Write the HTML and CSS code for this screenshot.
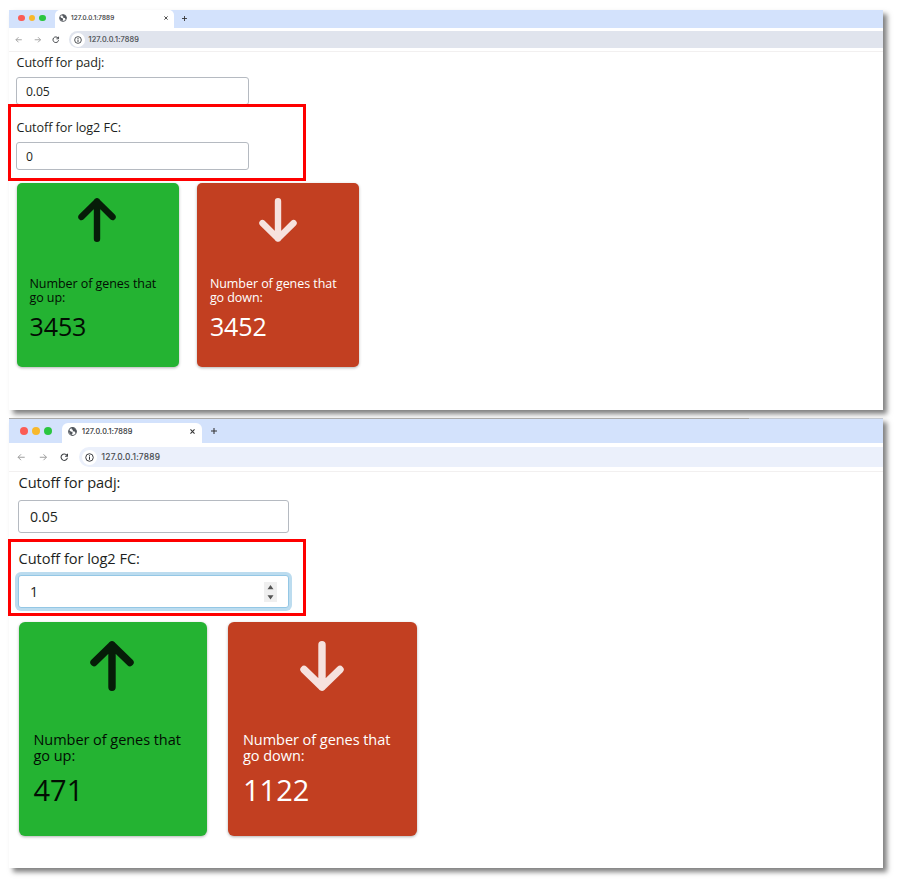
FILE: index.html
```html
<!DOCTYPE html>
<html lang="en">
<head>
<meta charset="utf-8">
<title>Gene cutoffs</title>
<link rel="stylesheet" href="styles.css">
</head>
<body>
<svg class="defs" aria-hidden="true">
  <symbol id="globe" viewBox="0 0 16 16"><circle cx="8" cy="8" r="6.9" fill="#fff" stroke="#50555b" stroke-width="1.8"/><path d="M2 5.5L5 8l3 1v2l-1 3C3 13.500 1 9 2 5.500zM7 1.500L6.500 4 9 5.500 8 7.500l4 .5 1 3 2-3C15 4 11 1 7 1.500z" fill="#50555b"/></symbol>
  <symbol id="back" viewBox="0 0 16 16"><path d="M14.500 8H2M7.500 2.500L2 8l5.500 5.500" fill="none" stroke="#999" stroke-width="1.800"/></symbol>
  <symbol id="forward" viewBox="0 0 16 16"><path d="M1.500 8H14M8.500 2.500L14 8l-5.500 5.500" fill="none" stroke="#999" stroke-width="1.800"/></symbol>
  <symbol id="reload" viewBox="0 0 16 16"><path d="M13 4.500A6 6 0 1 0 14 9M14 1.500v4.500H9.500" fill="none" stroke="#3c3f43" stroke-width="2"/></symbol>
  <symbol id="info" viewBox="0 0 16 16"><circle cx="8" cy="8" r="6.700" fill="none" stroke="#33363a" stroke-width="1.700"/><path d="M8 7v5M8 4v2" stroke="#33363a" stroke-width="1.800"/></symbol>
  <symbol id="close" viewBox="0 0 16 16"><path d="M1.500 1.500l13 13M14.500 1.500l-13 13" stroke="#333" stroke-width="3.400"/></symbol>
  <symbol id="plus" viewBox="0 0 16 16"><path d="M8 0v16M0 8h16" stroke="#333" stroke-width="2.800"/></symbol>
  <symbol id="up" viewBox="0 0 44 50" preserveAspectRatio="none"><path d="M22 46.300V4M4 21.500L22 4l18 17.500" fill="none" stroke="currentColor" stroke-width="7.400" stroke-linecap="round" stroke-linejoin="round"/></symbol>
  <symbol id="down" viewBox="0 0 44 50" preserveAspectRatio="none"><path d="M22 3.700V46M4 28.500L22 46l18-17.500" fill="none" stroke="currentColor" stroke-width="7.400" stroke-linecap="round" stroke-linejoin="round"/></symbol>
</svg>

<section class="window small">
  <div class="tabbar">
    <div class="lights"><i class="red"></i><i class="amber"></i><i class="green"></i></div>
    <div class="tab"><svg class="globe"><use href="#globe"/></svg><span class="tab-title">127.0.0.1:7889</span><svg class="close"><use href="#close"/></svg></div>
    <svg class="plus"><use href="#plus"/></svg>
  </div>
  <div class="toolbar">
    <svg class="nav"><use href="#back"/></svg><svg class="nav"><use href="#forward"/></svg><svg class="nav"><use href="#reload"/></svg>
    <div class="address"><span class="site"><svg class="info"><use href="#info"/></svg></span><span class="url">127.0.0.1:7889</span></div>
  </div>
  <main class="content">
    <div class="label"><span>Cutoff for padj:</span></div>
    <div class="field">0.05</div>
    <div class="label second"><span>Cutoff for log2 FC:</span></div>
    <div class="field">0</div>
    <div class="cards">
      <article class="card up"><svg class="arrow"><use href="#up"/></svg><p>Number of genes that<br>go up:</p><strong>3453</strong></article>
      <article class="card down"><svg class="arrow"><use href="#down"/></svg><p>Number of genes that<br>go down:</p><strong>3452</strong></article>
    </div>
  </main>
  <div class="highlight"></div>
</section>

<section class="window large">
  <div class="edge"></div>
  <div class="tabbar">
    <div class="lights"><i class="red"></i><i class="amber"></i><i class="green"></i></div>
    <div class="tab"><svg class="globe"><use href="#globe"/></svg><span class="tab-title">127.0.0.1:7889</span><svg class="close"><use href="#close"/></svg></div>
    <svg class="plus"><use href="#plus"/></svg>
  </div>
  <div class="toolbar">
    <svg class="nav"><use href="#back"/></svg><svg class="nav"><use href="#forward"/></svg><svg class="nav"><use href="#reload"/></svg>
    <div class="address"><span class="site"><svg class="info"><use href="#info"/></svg></span><span class="url">127.0.0.1:7889</span></div>
  </div>
  <main class="content">
    <div class="label"><span>Cutoff for padj:</span></div>
    <div class="field">0.05</div>
    <div class="label second"><span>Cutoff for log2 FC:</span></div>
    <div class="field focused">1<svg class="spinner" viewBox="0 0 13 20"><path d="M3.500 7.200L6.500 3l3 4.200zM3.500 13.200l3 4.200 3-4.200z" fill="#555"/></svg></div>
    <div class="cards">
      <article class="card up"><svg class="arrow"><use href="#up"/></svg><p>Number of genes that<br>go up:</p><strong>471</strong></article>
      <article class="card down"><svg class="arrow"><use href="#down"/></svg><p>Number of genes that<br>go down:</p><strong>1122</strong></article>
    </div>
  </main>
  <div class="highlight"></div>
</section>
</body>
</html>
```
FILE: styles.css
```css
* { box-sizing: border-box; }
body { margin: 0; padding: 10px 20px 0 9px; background: #fff; font-family: "Open Sans", "Noto Sans", sans-serif; color: #1d1f21; height: 880px; overflow: hidden; }
svg { display: block; flex: none; }
.defs { display: none; }

.window { position: relative; width: 874px; background: #fff; box-shadow: 4px 4px 5px rgba(0, 0, 0, .5); }
.small { height: 400px; margin-bottom: 8px; }
.large { height: 450px; }
.edge { height: 1px; margin-bottom: 1px; background: linear-gradient(90deg, #aaa9a8 0 740px, #c4cad4 740px); }
.large { background: linear-gradient(#d3e2fc 0 3px, #fff 3px); }

.tabbar { display: flex; align-items: center; background: #d3e2fc; }
.small .tabbar { height: 18px; }
.large .tabbar { height: 23px; }
.lights { display: flex; }
.lights i { border-radius: 50%; }
.red { background: #fb5c55; }
.amber { background: #f8b82c; }
.green { background: #2ac640; }
.small .lights { width: 46px; padding-left: 9px; gap: 4px; margin-top: -2px; }
.small .lights i { width: 6.500px; height: 6.500px; }
.large .lights { width: 53px; padding-left: 11px; gap: 4px; margin-top: -1px; }
.large .lights i { width: 8px; height: 8px; }
.tab { display: flex; align-items: center; align-self: flex-end; background: #fff; color: #303236; font-family: Inter, sans-serif; }
.small .tab { width: 119px; height: 18px; padding: 0 6px 3px 4px; border-radius: 5px 5px 0 0; font-size: 6.400px; letter-spacing: .12px; }
.large .tab { width: 140px; height: 20px; padding: 0 7px 4px 6px; border-radius: 6px 6px 0 0; font-size: 7.400px; letter-spacing: .18px; }
.tab-title { flex: 1; white-space: nowrap; -webkit-text-stroke: .15px; }
.small .globe { width: 8px; height: 8px; margin-right: 4px; }
.large .globe { width: 9px; height: 9px; margin-right: 5px; }
.small .close { width: 4px; height: 4px; }
.large .close { width: 5px; height: 5px; }
.plus { width: 6px; height: 6px; }
.small .plus { margin: -2px 0 0 8px; width: 5px; height: 5px; }
.large .plus { margin: -1px 0 0 9px; }

.toolbar { display: flex; align-items: center; border-bottom: 1px solid #f2f0f0; }
.small .toolbar { height: 24px; padding-left: 6px; gap: 11px; }
.large .toolbar { height: 29px; padding-left: 8px; gap: 13px; }
.small .nav { width: 7.500px; height: 7.500px; }
.large .nav { width: 8.500px; height: 8.500px; }
.address { flex: 1; display: flex; align-items: center; font-family: Inter, sans-serif; color: #46494d; }
.url { -webkit-text-stroke: .15px; }
.small .address { margin-left: -2px; height: 17px; padding-left: 2px; border-radius: 9px 0 0 9px; background: #e0e4ed; font-size: 7.400px; letter-spacing: .18px; }
.large .address { margin-left: -3px; height: 20px; padding-left: 3px; border-radius: 10px 0 0 10px; background: #ebf0fb; font-size: 8.500px; letter-spacing: .26px; }
.site { display: grid; place-items: center; background: #fff; border-radius: 50%; }
.small .site { width: 14px; height: 14px; margin-right: 4px; }
.large .site { width: 15px; height: 15px; margin-right: 5px; }
.small .info { width: 8px; height: 8px; }
.large .info { width: 9px; height: 9px; }

.label { white-space: nowrap; }
.field { position: relative; border: 1px solid #b5bac1; background: #fff; }
.small .content { padding-left: 7px; }
.small .label { height: 25px; line-height: 21px; font-size: 12.600px; letter-spacing: -.05px; padding-left: .5px; }
.small .label.second { height: 37px; padding-top: 12px; }
.small .field { width: 233px; height: 28px; line-height: 27px; padding-left: 9px; border-radius: 3px; font-size: 12.200px; letter-spacing: -.1px; }
.large .content { padding-left: 9px; }
.large .label { height: 28px; line-height: 20px; font-size: 14.600px; letter-spacing: -.05px; padding-left: .5px; }
.large .label.second { height: 42px; padding-top: 15px; }
.large .field { width: 271px; height: 33px; line-height: 31px; padding-left: 11px; border-radius: 3px; font-size: 14.200px; letter-spacing: -.1px; }
.large .field.focused { border-color: #94c7e5; box-shadow: 0 0 0 3px #bcdcef; }
.spinner { position: absolute; right: 11px; top: 6px; width: 13px; height: 20px; background: #efefef; }

.cards { display: flex; }
.card { display: flex; flex-direction: column; box-shadow: 0 1px 3px rgba(0, 0, 0, .3); }
.card p { margin: 0; white-space: nowrap; }
.card strong { font-weight: 400; }
.up { background: #24b332; color: #020d03; }
.down { background: #c23f21; color: #fff; }
.arrow { align-self: center; }
.up .arrow { color: #061c08; }
.down .arrow { color: #f6e2de; }
.small .cards { gap: 18px; padding: 12.500px 0 0 .5px; }
.small .card { width: 162.400px; height: 184px; padding: 15.500px 13px 0; border-radius: 5px; }
.small .arrow { width: 38px; height: 44px; margin-left: -1px; }
.small .card p { margin-top: 34.500px; font-size: 12.500px; letter-spacing: -.06px; line-height: 14.500px; }
.small .card strong { font-size: 25px; letter-spacing: -.1px; line-height: 29px; margin-top: 6.500px; }
.large .cards { gap: 21px; padding: 14px 0 0 .5px; }
.large .card { width: 188.500px; height: 214px; padding: 19px 15px 0; border-radius: 6px; }
.large .arrow { width: 44px; height: 50px; margin-left: -1px; }
.large .card p { margin-top: 40.500px; font-size: 14.500px; letter-spacing: -.05px; line-height: 16.500px; }
.large .card strong { font-size: 29px; line-height: 34px; margin-top: 8px; }

.highlight { position: absolute; left: -1px; width: 298px; height: 77px; border: 3px solid #fe0000; }
.small .highlight { top: 94px; }
.large .highlight { top: 121px; }
```
